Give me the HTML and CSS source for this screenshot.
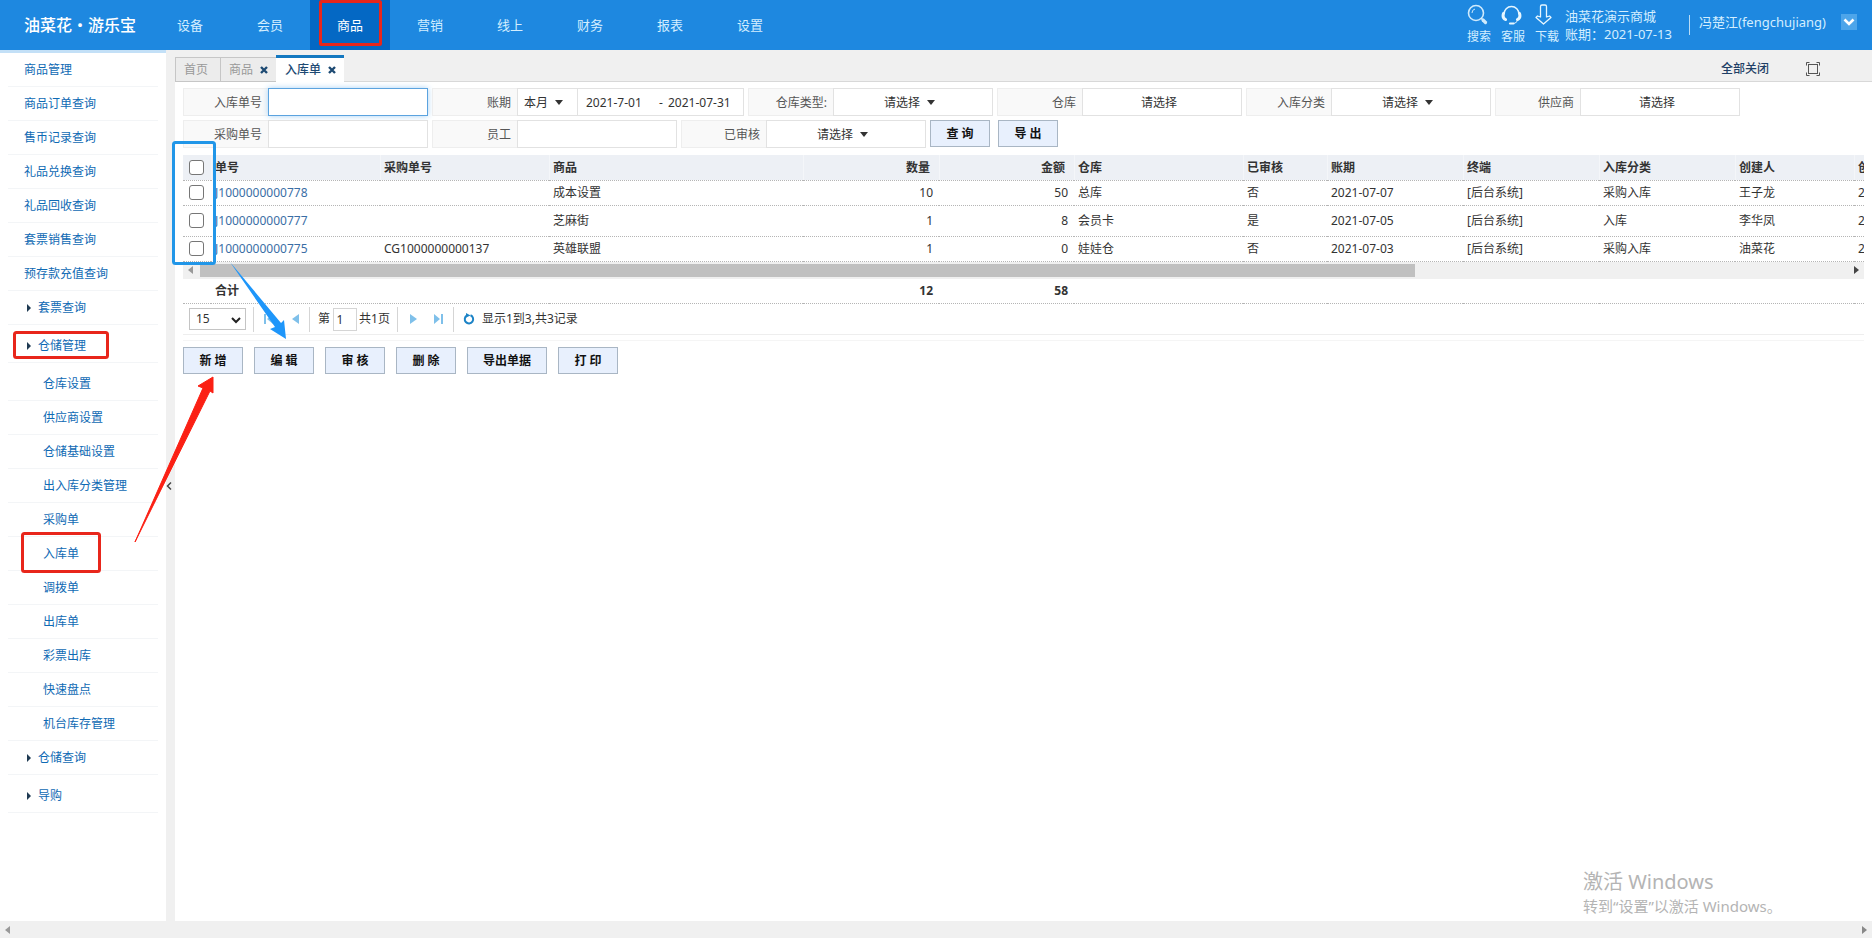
FILE: index.html
```html
<!DOCTYPE html>
<html lang="zh-CN">
<head>
<meta charset="utf-8">
<title>入库单</title>
<link rel="stylesheet" href="styles.css">
</head>
<body>
<header class="topbar">
  <div class="logo">油菜花・游乐宝</div>
  <nav class="nav">
    <a href="#">设备</a><a href="#">会员</a><a href="#" class="active">商品</a><a href="#">营销</a><a href="#">线上</a><a href="#">财务</a><a href="#">报表</a><a href="#">设置</a>
  </nav>
  <div class="tools">
    <a href="#" class="tool"><svg width="22" height="22" viewBox="0 0 22 22" fill="none" stroke="#cfeafc"><circle cx="9" cy="9" r="7.5" stroke-width="1.6"/><path d="M5 9a4 4 0 0 1 3-4" stroke-width="1"/><path d="M14 14l2 2" stroke-width="1.5"/><path d="M16 16l2.500 2.500" stroke-width="3.200" stroke-linecap="round"/></svg><span>搜索</span></a>
    <a href="#" class="tool"><svg width="22" height="22" viewBox="0 0 22 22" fill="none" stroke="#e6f6ff"><path d="M3 10a7.500 7.500 0 0 1 15 0" stroke-width="1.500"/><path d="M2.500 9.500c-1 3 0 5 2 6M18.500 9.500c1 3 0 5-2 6" stroke-width="3" stroke-linecap="round"/><path d="M17 16c-1 2-3 3.500-5 3.500" stroke-width="1"/><path d="M9 19.500h3.500" stroke-width="2.200" stroke-linecap="round"/></svg><span>客服</span></a>
    <a href="#" class="tool"><svg width="18" height="22" viewBox="0 0 18 22" fill="none" stroke="#e6f6ff" stroke-width="1.300" stroke-linejoin="round"><path d="M5.500 2.500a1.500 1.500 0 0 1 1.500-1.500h3a1.500 1.500 0 0 1 1.500 1.500V13l3-1 1.500 1.500-7.500 6.500L1 13.500 2.500 12l3 1z"/></svg><span>下载</span></a>
  </div>
  <div class="shop"><div>油菜花演示商城</div><div>账期：2021-07-13</div></div>
  <div class="user">冯楚江(fengchujiang)</div>
  <button class="user-menu" aria-label="用户菜单"><svg width="16" height="16" viewBox="0 0 16 16" fill="none" stroke="#fff" stroke-width="2.600"><path d="M3.500 5.500L8 10l4.500-4.500"/></svg></button>
</header>
<div class="body">
  <aside class="side">
    <ul class="menu">
      <li><a href="#">商品管理</a></li>
      <li><a href="#">商品订单查询</a></li>
      <li><a href="#">售币记录查询</a></li>
      <li><a href="#">礼品兑换查询</a></li>
      <li><a href="#">礼品回收查询</a></li>
      <li><a href="#">套票销售查询</a></li>
      <li><a href="#">预存款充值查询</a></li>
      <li class="group"><a href="#">套票查询</a></li>
      <li class="group tall"><a href="#">仓储管理</a></li>
      <li class="sub tall"><a href="#">仓库设置</a></li>
      <li class="sub"><a href="#">供应商设置</a></li>
      <li class="sub"><a href="#">仓储基础设置</a></li>
      <li class="sub"><a href="#">出入库分类管理</a></li>
      <li class="sub"><a href="#">采购单</a></li>
      <li class="sub"><a href="#">入库单</a></li>
      <li class="sub"><a href="#">调拨单</a></li>
      <li class="sub"><a href="#">出库单</a></li>
      <li class="sub"><a href="#">彩票出库</a></li>
      <li class="sub"><a href="#">快速盘点</a></li>
      <li class="sub"><a href="#">机台库存管理</a></li>
      <li class="group"><a href="#">仓储查询</a></li>
      <li class="group tall"><a href="#">导购</a></li>
    </ul>
  </aside>
  <div class="gutter"><svg width="6" height="10" viewBox="0 0 6 10" fill="none" stroke="#444" stroke-width="1.500"><path d="M5 1.500L1.500 5 5 8.500"/></svg></div>
  <main class="main">
    <div class="tabs">
      <a href="#" class="tab plain">首页</a>
      <a href="#" class="tab">商品 <svg width="8" height="8" viewBox="0 0 8 8"><path d="M1 1l6 6M7 1L1 7" stroke="#1d4a73" stroke-width="2.400"/></svg></a>
      <a href="#" class="tab current">入库单 <svg width="8" height="8" viewBox="0 0 8 8"><path d="M1 1l6 6M7 1L1 7" stroke="#1d4a73" stroke-width="2.400"/></svg></a>
      <a href="#" class="close-all">全部关闭</a>
      <button class="full" aria-label="全屏"><svg width="14" height="14" viewBox="0 0 14 14" fill="none" stroke="#555"><rect x="2.500" y="2.500" width="9" height="9"/><path d="M.5 3.500v-3h3M10.500.5h3v3M13.500 10.500v3h-3M3.500 13.500h-3v-3"/></svg></button>
    </div>
    <div class="content">
      <form class="filters">
        <div class="field"><label for="f1">入库单号</label><input id="f1" class="box focus" type="text"></div>
        <div class="field wide"><label for="f2">账期</label>
          <span class="pick short"><select id="f2"><option>本月</option></select><i class="caret"></i></span>
          <span class="box dates"><input type="text" aria-label="开始日期" value="2021-7-01"><span>-</span><input type="text" aria-label="结束日期" value="2021-07-31"></span></div>
        <div class="field"><label for="f3">仓库类型:</label><span class="pick"><select id="f3"><option>请选择</option></select><i class="caret"></i></span></div>
        <div class="field"><label for="f4">仓库</label><button type="button" id="f4" class="box chooser">请选择</button></div>
        <div class="field"><label for="f5">入库分类</label><span class="pick"><select id="f5"><option>请选择</option></select><i class="caret"></i></span></div>
        <div class="field"><label for="f6">供应商</label><button type="button" id="f6" class="box chooser">请选择</button></div>
        <div class="field"><label for="f7">采购单号</label><input id="f7" class="box" type="text"></div>
        <div class="field"><label for="f8">员工</label><input id="f8" class="box" type="text"></div>
        <div class="field"><label for="f9">已审核</label><span class="pick"><select id="f9"><option>请选择</option></select><i class="caret"></i></span></div>
        <div class="query"><button type="button" class="btn">查 询</button><button type="button" class="btn">导 出</button></div>
      </form>
      <div class="grid">
        <table>
          <colgroup><col class="c28"><col class="c169"><col class="c169"><col class="c254"><col class="c136"><col class="c135"><col class="c169"><col class="c84"><col class="c136"><col class="c136"><col class="c136"><col class="c119"><col class="c136"></colgroup>
          <thead><tr><th><input type="checkbox" aria-label="全选"></th><th>单号</th><th>采购单号</th><th>商品</th><th class="num">数量</th><th class="num">金额</th><th>仓库</th><th>已审核</th><th>账期</th><th>终端</th><th>入库分类</th><th>创建人</th><th>创建时间</th></tr></thead>
          <tbody>
            <tr><td><input type="checkbox" aria-label="选择"></td><td><a href="#">J1000000000778</a></td><td></td><td>成本设置</td><td class="num">10</td><td class="num">50</td><td>总库</td><td>否</td><td>2021-07-07</td><td>[后台系统]</td><td>采购入库</td><td>王子龙</td><td>2021-07-07</td></tr>
            <tr class="mid"><td><input type="checkbox" aria-label="选择"></td><td><a href="#">J1000000000777</a></td><td></td><td>芝麻街</td><td class="num">1</td><td class="num">8</td><td>会员卡</td><td>是</td><td>2021-07-05</td><td>[后台系统]</td><td>入库</td><td>李华凤</td><td>2021-07-05</td></tr>
            <tr><td><input type="checkbox" aria-label="选择"></td><td><a href="#">J1000000000775</a></td><td>CG1000000000137</td><td>英雄联盟</td><td class="num">1</td><td class="num">0</td><td>娃娃仓</td><td>否</td><td>2021-07-03</td><td>[后台系统]</td><td>采购入库</td><td>油菜花</td><td>2021-07-03</td></tr>
          </tbody>
        </table>
      </div>
      <div class="hscroll"><i class="tri left"></i><div class="track"><div class="thumb"></div></div><i class="tri right"></i></div>
      <div class="grid">
        <table class="totals">
          <colgroup><col class="c28"><col class="c169"><col class="c169"><col class="c254"><col class="c136"><col class="c135"><col class="c169"><col class="c84"><col class="c136"><col class="c136"><col class="c136"><col class="c119"><col class="c136"></colgroup>
          <tbody><tr><td></td><td>合计</td><td></td><td></td><td class="num">12</td><td class="num">58</td><td></td><td></td><td></td><td></td><td></td><td></td><td></td></tr></tbody>
        </table>
      </div>
      <div class="pager">
        <span class="size"><select aria-label="每页条数"><option>15</option></select><svg width="10" height="8" viewBox="0 0 10 8" fill="none" stroke="#222" stroke-width="2"><path d="M1 2l4 4 4-4"/></svg></span>
        <div class="cell"><button aria-label="首页"><svg width="9" height="10" viewBox="0 0 9 10" fill="#7fc0ea"><path d="M0 0h2v10H0zM9 0v10L3 5z"/></svg></button><button aria-label="上一页"><svg width="7" height="10" viewBox="0 0 7 10" fill="#7fc0ea"><path d="M7 0v10L0 5z"/></svg></button></div>
        <div class="cell page"><label for="pg">第</label><input id="pg" type="text" value="1"><span>共1页</span></div>
        <div class="cell next"><button aria-label="下一页"><svg width="7" height="10" viewBox="0 0 7 10" fill="#7fc0ea"><path d="M0 0v10l7-5z"/></svg></button><button aria-label="末页"><svg width="9" height="10" viewBox="0 0 9 10" fill="#7fc0ea"><path d="M0 0v10l6-5zM7 0h2v10H7z"/></svg></button></div>
        <div class="cell info"><svg width="12" height="12" viewBox="0 0 12 12" fill="none" stroke="#1c83c6" stroke-width="2"><path d="M7.500 2.300a4.200 4.200 0 1 1-3.500.2"/><path d="M3 0v4.500L7.500 2.500z" fill="#1c83c6" stroke="none"/></svg><span>显示1到3,共3记录</span></div>
      </div>
      <div class="actions">
        <button class="btn">新 增</button><button class="btn">编 辑</button><button class="btn">审 核</button><button class="btn">删 除</button><button class="btn long">导出单据</button><button class="btn">打 印</button>
      </div>
    </div>
  </main>
</div>
<div class="hscroll page-scroll"><i class="tri left"></i><div class="track"></div><i class="tri right dim"></i></div>
<div class="watermark"><div class="wm-title">激活 Windows</div><div>转到“设置”以激活 Windows。</div></div>
<svg class="marks" width="640" height="600" viewBox="0 0 640 600" fill="none">
  <g stroke="#e8261b" stroke-width="3"><rect x="320.500" y="1.500" width="60" height="43" rx="1"/><rect x="14.500" y="332.500" width="93" height="25" rx="2"/><rect x="22.500" y="533.500" width="77" height="38" rx="2"/></g>
  <rect x="173.500" y="142.500" width="41" height="121" rx="2" stroke="#2196e8" stroke-width="3"/>
  <path d="M230 262L281 323 284 320 286 339 270 329 275 327z" fill="#1e96fa"/>
  <path d="M135 542L203 388 198 386 213 377 213 393 210 391z" fill="#fb2014" stroke="#fb2014"/>
</svg>
</body>
</html>
```
FILE: styles.css
```css
* { box-sizing: border-box; }
body {
  margin: 0;
  min-height: 100vh;
  position: relative;
  display: flex;
  flex-direction: column;
  background: #fff;
  color: #333;
  font: 12px/18px "Noto Sans", "Noto Sans CJK SC", sans-serif;
  overflow-x: hidden;
}
a { text-decoration: none; color: inherit; }
button, input, select { font: inherit; color: inherit; margin: 0; }
button { background: none; border: 0; padding: 0; }
svg { display: block; }

.topbar { display: flex; height: 50px; background: #1e88e0; color: #d3eeff; font-size: 13px; }
.logo { width: 150px; padding-left: 24px; line-height: 50px; font-size: 16px; font-weight: 500; color: #fff; white-space: nowrap; }
.nav { display: flex; flex: 1; }
.nav a { width: 80px; text-align: center; line-height: 50px; }
.nav .active { background: #0468c4; color: #fff; }
.tools { display: flex; gap: 10px; padding-top: 4px; }
.tool { display: flex; flex-direction: column; gap: 2px; width: 24px; font-size: 12px; }
.shop { padding: 7px 0 0 6px; width: 130px; white-space: nowrap; }
.user { margin: 15px 0 0; height: 20px; width: 152px; border-left: 1px solid #b9dcf6; padding-left: 9px; line-height: 14px; white-space: nowrap; }
.user-menu { width: 16px; height: 16px; margin: 14px 15px 0 0; background: #4da5ea; }

.body { flex: 1; display: flex; }
.side { width: 166px; border-top: 3px solid #c3e0f7; padding: 0 8px; }
.menu { list-style: none; margin: 0; padding: 0; color: #0f6ab4; }
.menu li { height: 34px; padding-left: 16px; line-height: 33px; border-bottom: 1px solid #f3f5f7; }
.menu .sub { padding-left: 35px; }
.menu .group { display: flex; align-items: center; gap: 7px; padding-left: 19px; }
.menu .group::before { content: ""; border: 4px solid transparent; border-left-color: #1f3a52; border-right: 0; }
.menu .tall { height: 38px; padding-top: 4px; }
.gutter { width: 9px; background: #f0f0f0; display: flex; align-items: center; justify-content: flex-start; }

.main { flex: 1; min-width: 0; }
.tabs { display: flex; align-items: flex-end; height: 32px; background: #f0f0f0; box-shadow: inset 0 -1px #d8d8d8; color: #999; }
.tab { display: flex; align-items: center; gap: 7px; height: 25px; padding: 0 8px; border: 1px solid #c6c6c6; border-right: 0; background: #ececec; }
.tab.plain { padding: 0 12px 0 8px; }
.tab.current { height: 27px; padding-left: 9px; border: 0; border-top: 3px solid #1478c0; background: #fff; color: #1d4a73; font-weight: 500; }
.close-all { margin-left: auto; padding-bottom: 4px; color: #1f3f66; font-weight: 500; }
.full { margin: 0 52px 6px 37px; }
.content { padding: 6px 8px 0; }

.filters { display: flex; flex-wrap: wrap; gap: 4px; margin-bottom: 7px; }
.field { display: flex; width: 245px; height: 28px; color: #555; }
.field.wide { width: 312px; }
.field label { width: 85px; padding-right: 6px; text-align: right; line-height: 27px; background: #f9f9f9; border: 1px solid #eee; border-right: 0; }
.box { flex: 1; min-width: 0; border: 1px solid #e2e2e2; background: #fff; }
.box.focus { border-color: #5ba3df; box-shadow: 0 0 6px #a8d2f5; outline: 0; }
.pick { position: relative; flex: 1; display: flex; }
.pick.short { flex: 0 0 60px; }
.pick select { appearance: none; width: 100%; padding: 1px 0 0 50px; border: 1px solid #e2e2e2; background: #fff; color: #333; border-radius: 0; }
.pick.short select { padding-left: 6px; border-right: 0; }
.caret { position: absolute; left: 94px; top: 12px; border: 4px solid transparent; border-top: 5px solid #333; border-bottom: 0; pointer-events: none; }
.short .caret { left: 38px; }
.dates { display: flex; align-items: center; padding: 1px 0 0 8px; color: #333; }
.dates input { width: 73px; border: 0; padding: 0; background: none; }
.dates span { width: 9px; }
.chooser { color: #333; padding: 1px 6px 0 0; }
.query { display: flex; gap: 8px; }
.btn { width: 60px; height: 27px; border: 1px solid #a9b6c4; background: #e8f0fd; color: #111; font-weight: 700; }
.btn.long { width: 80px; }

.grid { overflow: hidden; }
table { table-layout: fixed; width: 1707px; border-collapse: collapse; }
.c28 { width: 28px; } .c84 { width: 84px; } .c119 { width: 119px; } .c135 { width: 135px; } .c136 { width: 136px; } .c169 { width: 169px; } .c254 { width: 254px; }
th, td { height: 25px; padding: 0 4px; text-align: left; white-space: nowrap; overflow: hidden; border-bottom: 1px dotted #b5b5b5; }
th { padding-top: 1px; background: #edf0f5; font-weight: 700; color: #333; }
th + th { box-shadow: inset 1px 0 #f4f6f9; }
.mid td { height: 31px; }
td a { color: #3a6ea5; }
th.num { text-align: right; padding-right: 9px; }
td.num { text-align: right; padding-right: 6px; }
.totals td { font-weight: 700; }
th input, td input { display: block; appearance: none; width: 15px; height: 15px; margin: 0 2px; border: 1px solid #767676; border-radius: 3px; background: #fff; }

.hscroll { display: flex; align-items: center; height: 17px; padding: 0 5px; background: #f0f0f0; }
.track { flex: 1; margin: 0 7px; }
.thumb { width: 73.8%; height: 13px; background: #c0c0c0; }
.tri { border: 4px solid transparent; }
.tri.left { border-right: 5px solid #999; border-left: 0; }
.tri.right { border-left: 5px solid #444; border-right: 0; }
.tri.dim { border-left-color: #888; }

.pager { display: flex; align-items: center; height: 31px; padding-left: 6px; border-bottom: 1px solid #eee; }
.size { position: relative; width: 57px; margin-right: 7px; }
.size select { appearance: none; display: block; width: 100%; height: 22px; padding: 0 6px; border: 1px solid #c4c4c4; border-radius: 0; background: #fff; }
.size svg { position: absolute; right: 5px; top: 8px; pointer-events: none; }
.cell { display: flex; align-items: center; justify-content: space-between; height: 25px; width: 56px; padding: 0 10px; border-left: 1px solid #d5d5d5; white-space: nowrap; }
.cell.page { width: 88px; padding: 0 7px 0 8px; }
.cell.page input { width: 24px; height: 23px; padding: 0 3px; border: 1px solid #d5d5d5; }
.cell.next { padding-left: 12px; }
.cell.info { width: auto; gap: 7px; padding: 0 0 0 9px; }
.actions { display: flex; gap: 11px; margin-top: 5px; padding-top: 6px; border-top: 1px solid #f5f5f5; }

.watermark { position: absolute; right: 82px; bottom: 22px; width: 207px; color: #b4b4b4; font-size: 15px; line-height: 20px; white-space: nowrap; pointer-events: none; }
.wm-title { font-size: 20px; line-height: 28px; }
.marks { position: absolute; left: 0; top: 0; pointer-events: none; }
```
